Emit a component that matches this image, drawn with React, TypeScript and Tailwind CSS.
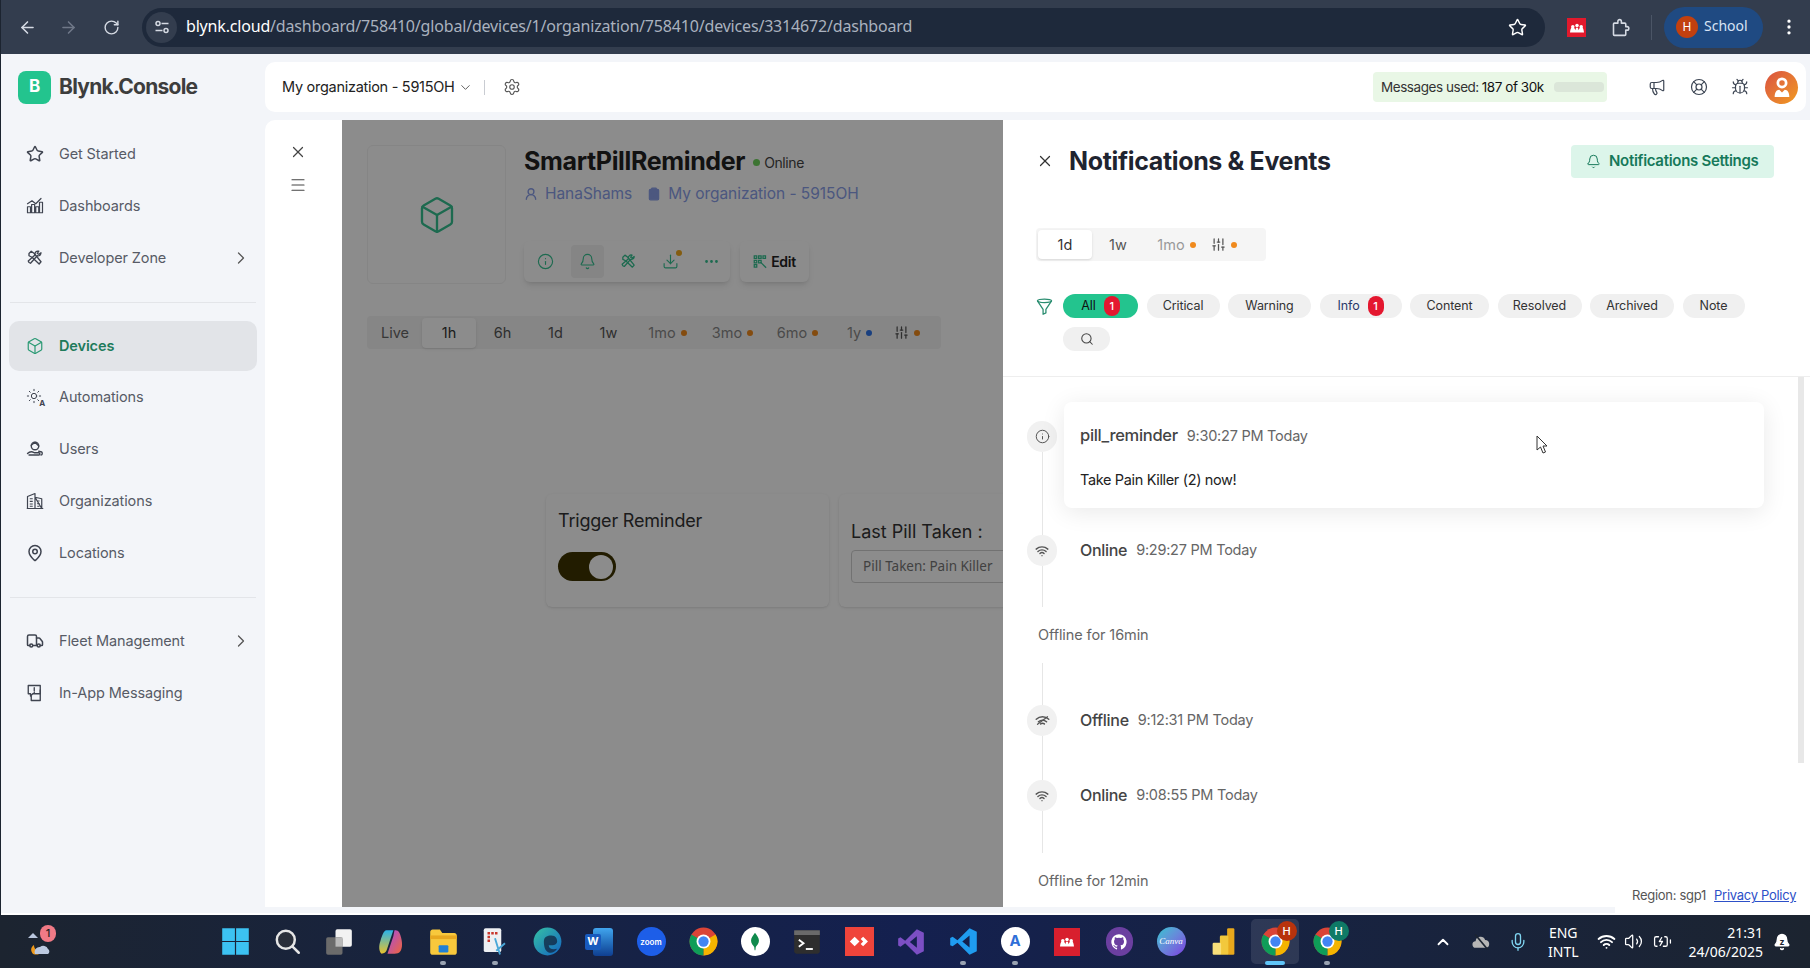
import React from "react";
import {
  ArrowLeft,
  ArrowRight,
  RotateCw,
  Star,
  EllipsisVertical,
  ChevronDown,
  ChevronRight,
  Settings,
  Megaphone,
  LifeBuoy,
  Bug,
  X,
  Menu,
  Box,
  UserRound,
  ClipboardList,
  Info,
  Bell,
  Download,
  Ellipsis,
  SlidersVertical,
  Search,
  Wifi,
  MapPin,
  Truck,
  Sun,
  ChevronUp,
  Mic,
  Volume2,
  BatteryCharging,
} from "lucide-react";

function ToolsIcon({ className }: { className?: string }) {
  return (
    <svg className={className} viewBox="0 0 24 24" fill="none" stroke="currentColor" strokeWidth="1.8" strokeLinejoin="round" strokeLinecap="round">
      <path d="M4 6l3-3 4 3 9 11-2.500 3L8 11 4 9z" />
      <path d="M20 5a4 4 0 0 1-5 4L6 19l-2-1-1-2 9-8a4 4 0 0 1 5-5l-2 3 2 1z" />
    </svg>
  );
}

function ChartIcon({ className }: { className?: string }) {
  return (
    <svg className={className} viewBox="0 0 24 24" fill="none" stroke="currentColor" strokeWidth="1.6" strokeLinejoin="round">
      <path d="M2 21v-8h4v8zM7.500 21V10h4v11zM13 21v-8h4v8zM18 21V7h4v14z" />
      <path d="M2 9l6-4 5 4 7-7" strokeLinecap="round" />
    </svg>
  );
}

function AutomationIcon({ className }: { className?: string }) {
  return (
    <span className={`relative block ${className}`}>
      <Sun className="h-[16px] w-[16px]" strokeWidth={1.5} />
      <span className="absolute -bottom-[1px] -right-[1px] bg-[#f3f5f9] text-[8px] font-bold leading-[8px]">A</span>
    </span>
  );
}

function PersonHandIcon({ className }: { className?: string }) {
  return (
    <svg className={className} viewBox="0 0 24 24" fill="none" stroke="currentColor" strokeWidth="1.8" strokeLinejoin="round" strokeLinecap="round">
      <circle cx="12" cy="8" r="5" />
      <path d="M7 7l5-4 5 5" />
      <path d="M2 18c3-3 6-3 9-1h6c2 0 2 3 0 3H4" />
      <path d="M17 15l4 1c1 1 1 4-1 4" />
    </svg>
  );
}

function BuildingIcon({ className }: { className?: string }) {
  return (
    <svg className={className} viewBox="0 0 24 24" fill="none" stroke="currentColor" strokeWidth="1.6" strokeLinejoin="round">
      <path d="M2 22V6l10-4v20zM12 7l9 2v13zM1 22h22" />
      <path d="M5 9h4M5 12.500h4M5 16h4M5 19h4M15 12h3M15 15.500h3M15 19h3" strokeWidth="1.400" />
    </svg>
  );
}

function PhoneMsgIcon({ className }: { className?: string }) {
  return (
    <svg className={className} viewBox="0 0 24 24" fill="none" stroke="currentColor" strokeWidth="1.8" strokeLinejoin="round" strokeLinecap="round">
      <path d="M7 16v6h12V8" />
      <path d="M3 2h16v11H9l-3 3v-3H3z" />
      <path d="M11 5v4M11 11v.5" />
    </svg>
  );
}

function EditGridIcon({ className }: { className?: string }) {
  return (
    <svg className={className} viewBox="0 0 24 24" fill="none" stroke="currentColor" strokeWidth="2">
      <path d="M2 3h4v4H2zM9 3h4v4H9zM16 3h4v4h-4zM2 10h4v4H2zM9 10h4v4H9zM2 17h4v4H2z" />
      <path d="M12 13l9 9" />
    </svg>
  );
}

function TuneIcon() {
  return (
    <svg viewBox="0 0 16 16" className="h-[16px] w-[16px]" fill="none" stroke="currentColor" strokeWidth="1.500">
      <circle cx="4" cy="4.500" r="2" />
      <path d="M7.500 4.500H14.500M1.500 11.500H8.500" />
      <circle cx="12" cy="11.500" r="2" />
    </svg>
  );
}

function ExtensionIcon() {
  return (
    <svg viewBox="0 0 24 24" className="ml-[24px] h-[21px] w-[21px]" fill="none" stroke="currentColor" strokeWidth="1.800" strokeLinejoin="round">
      <path d="M5 7h4V5a2 2 0 0 1 4 0v2h4a1 1 0 0 1 1 1v3h1.500a2 2 0 0 1 0 4H18v5a1 1 0 0 1-1 1H5a1 1 0 0 1-1-1V8a1 1 0 0 1 1-1z" />
    </svg>
  );
}

function FunnelIcon() {
  return (
    <svg viewBox="0 0 24 24" className="mt-[3px] h-[19px] w-[17px] shrink-0 text-[#2a8d70]" fill="none" stroke="currentColor" strokeWidth="1.800" strokeLinejoin="round">
      <ellipse cx="12" cy="4" rx="10" ry="2.500" />
      <path d="M2 4l8 12v7l4-2v-5l8-12" />
    </svg>
  );
}

function OfflineIcon() {
  return (
    <svg viewBox="0 0 24 24" className="h-[15px] w-[15px]" fill="none" stroke="currentColor" strokeWidth="2.400" strokeLinecap="round">
      <path d="M2 10a15 15 0 0 1 20 0M5.500 14a10 10 0 0 1 13 0M9 17.500a5 5 0 0 1 6 0" />
      <path d="M4 18L20 6" strokeWidth="2" />
    </svg>
  );
}

function AvatarIcon() {
  return (
    <svg viewBox="0 0 24 24" className="h-[22px] w-[22px]" fill="white">
      <path d="M12 1.500a6 6 0 1 1 0 12 6 6 0 0 1 0-12zm0 3a3 3 0 1 0 0 6 3 3 0 0 0 0-6z" fillRule="evenodd" />
      <path d="M4 23c0-5 2-8 5-8l3 3 3-3c3 0 5 3 5 8z" />
    </svg>
  );
}

const sideTop = [
  { label: "Get Started", Icon: Star },
  { label: "Dashboards", Icon: ChartIcon },
  { label: "Developer Zone", Icon: ToolsIcon, more: true },
];

const sideMid = [
  { label: "Automations", Icon: AutomationIcon },
  { label: "Users", Icon: PersonHandIcon },
  { label: "Organizations", Icon: BuildingIcon },
  { label: "Locations", Icon: MapPin },
];

const sideBottom = [
  { label: "Fleet Management", Icon: Truck, more: true },
  { label: "In-App Messaging", Icon: PhoneMsgIcon },
];

function SideItem({ label, Icon, more }: { label: string; Icon: React.ComponentType<{ className?: string }>; more?: boolean }) {
  return (
    <div className="flex h-[52px] items-center pl-[25px] pr-[14px] text-[14.500px] tracking-[-0.12px] text-[#575b66]">
      <Icon className="h-[18px] w-[18px] shrink-0 text-[#3f4450]" />
      <span className="ml-[15px] flex-1">{label}</span>
      {more && <ChevronRight className="h-5 w-5 text-[#555]" strokeWidth={1.5} />}
    </div>
  );
}

function Sidebar() {
  return (
    <aside className="flex w-[264px] shrink-0 flex-col">
      <div className="flex h-[66px] items-center pl-[17px]">
        <div className="flex h-[33px] w-[33px] items-center justify-center rounded-[8px] bg-[#23c48e] text-[17px] font-bold text-white">B</div>
        <span className="ml-[8px] text-[21px] font-bold tracking-[-0.75px] text-[#3d3d3d]">Blynk.Console</span>
      </div>
      <div className="mt-[8px]">
        {sideTop.map((s) => (
          <SideItem key={s.label} {...s} />
        ))}
      </div>
      <div className="mx-[9px] mt-[18px] border-t border-[#e3e5e9]" />
      <div className="mx-[8px] mt-[18px] flex h-[50px] items-center rounded-[10px] bg-[#e2e4e8] pl-[17px] text-[14.500px] font-semibold tracking-[-0.12px] text-[#1e7b5b]">
        <Box className="h-[18px] w-[18px] text-[#2b9a74]" strokeWidth={1.6} />
        <span className="ml-[15px]">Devices</span>
      </div>
      <div>
        {sideMid.map((s) => (
          <SideItem key={s.label} {...s} />
        ))}
      </div>
      <div className="mx-[9px] mt-[18px] border-t border-[#e3e5e9]" />
      <div className="mt-[17px]">
        {sideBottom.map((s) => (
          <SideItem key={s.label} {...s} />
        ))}
      </div>
    </aside>
  );
}

function Dot({ color = "bg-[#f08a1d]" }: { color?: string }) {
  return <span className={`ml-[5px] inline-block h-[6px] w-[6px] rounded-full ${color}`} />;
}

function ChromeBar() {
  return (
    <div className="flex h-[54px] shrink-0 items-center bg-[#333d4e] text-[#d5dae3]">
      <ArrowLeft className="ml-[17px] h-[19px] w-[19px]" />
      <ArrowRight className="ml-[22px] h-[19px] w-[19px] text-[#6f7888]" />
      <RotateCw className="ml-[25px] h-[17px] w-[17px]" />
      <div className="ml-[22px] flex h-[39px] w-[1403px] items-center rounded-full bg-[#1e293b] pl-[4px] pr-[18px]">
        <div className="flex h-[31px] w-[31px] items-center justify-center rounded-full bg-[#333d4e]">
          <TuneIcon />
        </div>
        <span className="ml-[9px] flex-1 -translate-y-[1px] font-['Noto_Sans',sans-serif] text-[16px] tracking-[-0.18px] text-[#aab2bf]">
          <span className="text-white">blynk.cloud</span>/dashboard/758410/global/devices/1/organization/758410/devices/3314672/dashboard
        </span>
        <Star className="h-[19px] w-[19px] text-white" strokeWidth={1.8} />
      </div>
      <div className="ml-[22px] flex h-[19px] w-[19px] items-center justify-center bg-[#e2192c]">
        <MendeleyGlyph />
      </div>
      <ExtensionIcon />
      <div className="ml-[20px] h-[25px] border-l border-[#4b5566]" />
      <div className="ml-[12px] flex h-[41px] w-[99px] items-center rounded-full bg-[#1f4a82] pl-[12px] font-['Noto_Sans',sans-serif] text-[14px] text-[#d8e4f5]">
        <span className="flex h-[22px] w-[22px] items-center justify-center rounded-full bg-[#c2400f] text-[12px] text-white">H</span>
        <span className="ml-[6px] -translate-y-[2px]">School</span>
      </div>
      <EllipsisVertical className="ml-[16px] h-[20px] w-[20px] text-white" />
    </div>
  );
}

function MendeleyGlyph() {
  return (
    <svg viewBox="0 0 20 14" className="h-[11px] w-[14px]" fill="white">
      <circle cx="10" cy="4" r="2.500" />
      <circle cx="4" cy="6" r="2.500" />
      <circle cx="16" cy="6" r="2.500" />
      <path d="M0 14c1-7 2-7 4-7s3 2 4 4c0-3 1-4 2-4s2 1 2 4c1-2 2-4 4-4s3 0 4 7z" />
    </svg>
  );
}

function Header() {
  return (
    <header className="mt-[8px] mr-[4px] flex h-[50px] items-center rounded-[10px] bg-white pl-[17px] pr-[8px]">
      <span className="text-[14.500px] tracking-[-0.28px] text-[#222]">My organization - 5915OH</span>
      <ChevronDown className="ml-[3px] h-[15px] w-[15px] text-[#555]" strokeWidth={1.5} />
      <div className="ml-[11px] h-[15px] border-l border-[#c9ccd2]" />
      <Settings className="ml-[18px] h-[18px] w-[18px] text-[#555]" strokeWidth={1.5} />
      <div className="ml-auto flex h-[30px] w-[234px] items-center rounded-[4px] bg-[#e9f7e6] pl-[8px] text-[13.500px] tracking-[-0.45px] text-[#333]">
        Messages used: <span className="ml-[3px] text-[#111]">187 of 30k</span>
        <div className="ml-[10px] h-[10px] w-[50px] rounded-[4px] bg-[#dbe6d9]" />
      </div>
      <Megaphone className="ml-[41px] h-[18px] w-[18px] text-[#3d4654]" strokeWidth={1.6} />
      <LifeBuoy className="ml-[24px] h-[18px] w-[18px] text-[#3d4654]" strokeWidth={1.6} />
      <Bug className="ml-[23px] h-[18px] w-[18px] text-[#3d4654]" strokeWidth={1.6} />
      <div className="ml-[16px] flex h-[33px] w-[33px] items-center justify-center rounded-full bg-gradient-to-br from-[#d9503f] to-[#f09a1a]">
        <AvatarIcon />
      </div>
    </header>
  );
}

const tabs = [
  { label: "6h" },
  { label: "1d" },
  { label: "1w" },
  { label: "1mo", dot: "bg-[#f08a1d]" },
  { label: "3mo", dot: "bg-[#f08a1d]" },
  { label: "6mo", dot: "bg-[#f08a1d]" },
  { label: "1y", dot: "bg-[#2f74e8]" },
];

function DevicePanel() {
  return (
    <div className="relative w-[661px] shrink-0 overflow-hidden bg-white pl-[25px] pt-[25px]">
      <div className="flex">
        <div className="flex h-[139px] w-[139px] items-center justify-center rounded-[6px] border border-[#f2f2f2]">
          <Box className="h-[40px] w-[40px] text-[#35c191]" strokeWidth={1.4} />
        </div>
        <div className="ml-[18px]">
          <div className="flex h-[32px] translate-y-[1px] items-center">
            <span className="text-[25px] font-bold tracking-[-0.35px] text-[#222]">SmartPillReminder</span>
            <span className="ml-[8px] h-[7px] w-[7px] rounded-full bg-[#6ed35c]" />
            <span className="ml-[4px] text-[14px] tracking-[-0.4px] text-[#444]">Online</span>
          </div>
          <div className="mt-[5px] flex items-center text-[15.500px] tracking-[-0.05px] text-[#8a9ee8]">
            <UserRound className="h-[14px] w-[14px]" strokeWidth={2.4} />
            <span className="ml-[7px]">HanaShams</span>
            <ClipboardList className="ml-[15px] h-[14px] w-[14px]" fill="currentColor" />
            <span className="ml-[7px]">My organization - 5915OH</span>
          </div>
          <div className="mt-[36px] flex">
            <div className="flex h-[41px] w-[206px] items-center rounded-[6px] bg-white pl-[5px] shadow-md">
              <ToolBtn><Info className="h-[17px] w-[17px]" strokeWidth={1.6} /></ToolBtn>
              <ToolBtn active><Bell className="h-[17px] w-[17px]" strokeWidth={1.6} /></ToolBtn>
              <ToolBtn><ToolsIcon className="h-[17px] w-[17px]" /></ToolBtn>
              <ToolBtn>
                <span className="relative">
                  <Download className="h-[17px] w-[17px]" strokeWidth={1.6} />
                  <span className="absolute -right-[3px] -top-[3px] h-[6px] w-[6px] rounded-full bg-[#f0a81d]" />
                </span>
              </ToolBtn>
              <ToolBtn><Ellipsis className="h-[17px] w-[17px]" /></ToolBtn>
            </div>
            <div className="ml-[10px] flex h-[41px] w-[69px] items-center justify-center rounded-[6px] bg-white text-[14px] font-semibold tracking-[-0.3px] text-[#222] shadow-md">
              <EditGridIcon className="mr-[3px] h-[15px] w-[15px] text-[#35c191]" />
              Edit
            </div>
          </div>
        </div>
      </div>
      <div className="mt-[32px] flex h-[33px] w-[574px] items-center rounded-[4px] bg-[#f4f4f4] pl-[14px] text-[14.500px] text-[#666]">
        <span className="w-[41px]">Live</span>
        <span className="flex h-[30px] w-[54px] items-center justify-center rounded-[4px] bg-white text-[#333] shadow-sm">1h</span>
        {tabs.map((t, i) => (
          <span key={t.label} className={`flex items-center justify-center ${i < 3 ? "w-[53px] text-[#555]" : i === 6 ? "w-[59px] text-[#888]" : "w-[65px] text-[#888]"}`}>
            {t.label}
            {t.dot && <Dot color={t.dot} />}
          </span>
        ))}
        <span className="ml-[5px] flex items-center text-[#555]">
          <SlidersVertical className="h-[15px] w-[15px]" />
          <Dot />
        </span>
      </div>
      <div className="ml-[179px] mt-[145px] flex gap-[10px]">
        <div className="h-[113px] w-[283px] shrink-0 rounded-[6px] bg-white px-[12px] pt-[13px] shadow-sm">
          <div className="text-[18px] tracking-[-0.2px] text-[#333]">Trigger Reminder</div>
          <div className="mt-[18px] flex h-[29px] w-[58px] items-center justify-end rounded-full bg-[#3e3300] pr-[3px]">
            <span className="h-[24px] w-[24px] rounded-full bg-white" />
          </div>
        </div>
        <div className="h-[113px] w-[283px] shrink-0 rounded-[6px] bg-white px-[12px] pt-[24px] shadow-sm">
          <div className="text-[18px] leading-[28px] text-[#333]">Last Pill Taken :</div>
          <div className="mt-[4px] flex h-[33px] items-center rounded-[4px] border border-[#d0d0d0] pl-[11px] font-['Noto_Sans',sans-serif] text-[13.500px] text-[#777]">
            Pill Taken: Pain Killer
          </div>
        </div>
      </div>
      <div className="absolute inset-0 bg-black/45" />
    </div>
  );
}

function ToolBtn({ children, active }: { children: React.ReactNode; active?: boolean }) {
  return (
    <div className={`mr-[8.500px] flex h-[33px] w-[33px] shrink-0 items-center justify-center rounded-[4px] text-[#35c191] ${active ? "bg-[#f2f2f2]" : ""}`}>
      {children}
    </div>
  );
}

const chips = [
  { label: "All", badge: true, active: true, w: "w-[75px]" },
  { label: "Critical", w: "w-[73px]" },
  { label: "Warning", w: "w-[83px]" },
  { label: "Info", badge: true, w: "w-[82px]" },
  { label: "Content", w: "w-[79px]" },
  { label: "Resolved", w: "w-[84px]" },
  { label: "Archived", w: "w-[84px]" },
  { label: "Note", w: "w-[62px]" },
];

function Badge() {
  return <span className="ml-[8px] flex h-[20px] w-[16px] items-center justify-center rounded-full bg-[#e4172f] text-[11px] font-medium text-white">1</span>;
}

function Rail({ icon, above = 0, below }: { icon: React.ReactNode; above?: number; below: number }) {
  return (
    <div className="flex w-[30px] shrink-0 flex-col items-center">
      <div className="w-px bg-[#e6e6e6]" style={{ height: above }} />
      <div className="flex h-[31px] w-[30px] items-center justify-center rounded-full bg-[#f1f1f1] text-[#555]">{icon}</div>
      <div className="w-px bg-[#e6e6e6]" style={{ height: below }} />
    </div>
  );
}

function StatusEvent({ label, time, icon, above, below }: { label: string; time: string; icon: React.ReactNode; above?: number; below: number }) {
  return (
    <div className="ml-[24px] flex">
      <Rail icon={icon} above={above} below={below} />
      <div className="ml-[23px] flex h-[29px] items-center" style={{ marginTop: above }}>
        <span className="text-[16px] font-medium tracking-[-0.3px] text-[#444]">{label}</span>
        <span className="ml-[9px] text-[14.500px] tracking-[-0.25px] text-[#666]">{time}</span>
      </div>
    </div>
  );
}

function Gap({ text }: { text: string }) {
  return <div className="ml-[35px] flex h-[56px] items-center text-[14.500px] tracking-[-0.1px] text-[#666]">{text}</div>;
}

function Drawer() {
  return (
    <div className="flex min-w-0 flex-1 flex-col bg-white">
      <div className="flex h-[82px] shrink-0 items-center pl-[33px] pr-[36px]">
        <X className="h-[18px] w-[18px] text-[#333]" strokeWidth={1.6} />
        <h2 className="ml-[15px] flex-1 translate-y-[1px] text-[25px] font-bold tracking-[-0.35px] text-[#1f2430]">Notifications &amp; Events</h2>
        <div className="flex h-[33px] w-[203px] items-center rounded-[4px] bg-[#dcf5ea] pl-[15px] text-[15px] font-semibold tracking-[-0.3px] text-[#16795a]">
          <Bell className="h-[15px] w-[15px]" strokeWidth={1.6} />
          <span className="ml-[8px]">Notifications Settings</span>
        </div>
      </div>
      <div className="ml-[33px] mt-[26px] flex h-[33px] w-[230px] shrink-0 items-center rounded-[4px] bg-[#f5f5f5] pl-[2px] text-[14.500px] text-[#555]">
        <span className="flex h-[29px] w-[54px] items-center justify-center rounded-[4px] bg-white text-[#333] shadow-sm">1d</span>
        <span className="w-[52px] text-center">1w</span>
        <span className="flex w-[65px] items-center justify-center text-[#999]">1mo<Dot /></span>
        <span className="ml-[2px] flex items-center"><SlidersVertical className="h-[15px] w-[15px]" /><Dot /></span>
      </div>
      <div className="ml-[33px] mt-[33px] flex shrink-0">
        <FunnelIcon />
        <div className="ml-[10px] flex w-[700px] flex-wrap gap-x-[8.500px] gap-y-[9px]">
          {chips.map((c) => (
            <span
              key={c.label}
              className={`flex h-[24px] items-center justify-center rounded-full text-[12.500px] tracking-[-0.1px] ${c.w} ${
                c.active ? "bg-[#23c48e] text-[#111]" : "bg-[#f0f0f0] " + (c.label === "Info" ? "text-[#2b3a6b]" : "text-[#333]")
              }`}
            >
              {c.label}
              {c.badge && <Badge />}
            </span>
          ))}
          <span className="flex h-[24px] w-[47px] items-center justify-center rounded-full bg-[#f0f0f0]">
            <Search className="h-[14px] w-[14px] text-[#444]" strokeWidth={1.8} />
          </span>
        </div>
      </div>
      <div className="relative mt-[25px] min-h-0 flex-1 overflow-hidden border-t border-[#eeeeee] pt-[25px]">
        <div className="ml-[24px] flex">
          <div className="mt-[19px]">
            <Rail icon={<Info className="h-[15px] w-[15px]" strokeWidth={1.6} />} below={83} />
          </div>
          <div className="ml-[7px] h-[106px] w-[700px] rounded-[8px] bg-white pl-[16px] pt-[18px] shadow-[0_4px_24px_rgba(0,0,0,0.09)]">
            <div className="flex h-[31px] items-center">
              <span className="text-[16.500px] font-medium tracking-[-0.3px] text-[#444]">pill_reminder</span>
              <span className="ml-[9px] text-[14.500px] tracking-[-0.25px] text-[#666]">9:30:27 PM Today</span>
            </div>
            <div className="mt-[18px] text-[14.500px] tracking-[-0.35px] text-[#222]">Take Pain Killer (2) now!</div>
          </div>
        </div>
        <StatusEvent label="Online" time="9:29:27 PM Today" icon={<Wifi className="h-[14px] w-[14px]" strokeWidth={2.4} />} below={41} />
        <Gap text="Offline for 16min" />
        <StatusEvent label="Offline" time="9:12:31 PM Today" icon={<OfflineIcon />} above={42} below={44} />
        <StatusEvent label="Online" time="9:08:55 PM Today" icon={<Wifi className="h-[14px] w-[14px]" strokeWidth={2.4} />} below={42} />
        <Gap text="Offline for 12min" />
        <div className="absolute right-[6px] top-0 h-[386px] w-[6px] bg-[#e8e8e8]" />
        <svg className="absolute left-[533px] top-[58px] h-[19px] w-[12px]" viewBox="0 0 12 19">
          <path d="M1 1v14l3.500-3 2.500 6 2.500-1-2.500-6H11z" fill="white" stroke="#333" strokeWidth="1" />
        </svg>
      </div>
    </div>
  );
}

function ChromeLogo({ badge, badgeColor }: { badge?: boolean; badgeColor?: string }) {
  return (
    <span className="relative block h-[29px] w-[29px]">
      <svg viewBox="0 0 48 48" className="h-full w-full">
        <circle cx="24" cy="24" r="23" fill="#db4437" />
        <path d="M24 24L44 12.500A23 23 0 0 1 24 47Z" fill="#f4b400" />
        <path d="M24 24L24 47A23 23 0 0 1 4 12.500Z" fill="#0f9d58" />
        <circle cx="24" cy="24" r="11.500" fill="white" />
        <circle cx="24" cy="24" r="8.500" fill="#4285f4" />
      </svg>
      {badge && (
        <span className={`absolute -right-[7px] -top-[6px] flex h-[20px] w-[20px] items-center justify-center rounded-full text-[11px] font-medium text-white ${badgeColor}`}>H</span>
      )}
    </span>
  );
}

const taskIcons: { key: string; node: React.ReactNode; running?: boolean; active?: boolean }[] = [
  {
    key: "start",
    node: (
      <svg viewBox="0 0 24 24" className="h-[29px] w-[29px]">
        <path d="M1 1h10.500v10.500H1zM12.500 1H23v10.500H12.500zM1 12.500h10.500V23H1zM12.500 12.500H23V23H12.500z" fill="#3cc2f2" />
      </svg>
    ),
  },
  {
    key: "search",
    node: (
      <svg viewBox="0 0 24 24" className="h-[27px] w-[27px]" fill="#2a2f3a" stroke="#e6e6e6" strokeWidth="2.200" strokeLinecap="round">
        <circle cx="10.500" cy="10.500" r="8" />
        <path d="M16.500 16.500L22 22" />
      </svg>
    ),
  },
  {
    key: "taskview",
    node: (
      <svg viewBox="0 0 24 24" className="h-[28px] w-[28px]">
        <rect x="9" y="1" width="14" height="15" rx="1.500" fill="#f2f2f2" />
        <rect x="1" y="8" width="14" height="15" rx="1.500" fill="#6b6b6b" />
        <rect x="9" y="8" width="6" height="8" fill="#b9b9b9" />
      </svg>
    ),
  },
  {
    key: "copilot",
    node: (
      <svg viewBox="0 0 24 24" className="h-[28px] w-[28px]">
        <defs>
          <linearGradient id="cpa" x1="0" y1="0" x2="0" y2="1">
            <stop offset="0" stopColor="#2bb3e8" />
            <stop offset="1" stopColor="#e8c22b" />
          </linearGradient>
          <linearGradient id="cpb" x1="0" y1="0" x2="1" y2="1">
            <stop offset="0" stopColor="#a34be0" />
            <stop offset="1" stopColor="#f0653c" />
          </linearGradient>
        </defs>
        <path d="M8 2h6l-5 15c-1 4-3 5-5 5-2-1-3-6-1-11 1-4 3-9 5-9z" fill="url(#cpa)" />
        <path d="M15 2c3 0 4 1 5 4 2 6 2 11 0 14-1 2-3 2-5 2H9l5-15z" fill="url(#cpb)" />
      </svg>
    ),
  },
  {
    key: "explorer",
    running: true,
    node: (
      <svg viewBox="0 0 24 24" className="h-[29px] w-[29px]">
        <path d="M1 4c0-1 1-2 2-2h6l2 3h10c1 0 2 1 2 2v14c0 1-1 2-2 2H3c-1 0-2-1-2-2z" fill="#f8c83c" />
        <rect x="1" y="7" width="22" height="3" fill="#e8a820" />
        <rect x="8" y="15" width="8" height="6" rx="1" fill="#1f80d6" />
      </svg>
    ),
  },
  {
    key: "snip",
    running: true,
    node: (
      <svg viewBox="0 0 24 24" className="h-[30px] w-[30px]">
        <rect x="3" y="1" width="14" height="19" rx="1.500" fill="#eef0f3" />
        <path d="M6 4h2v2H6zM9 4h2v2H9zM12 4h2v2h-2zM6 7h2v2H6zM6 10h2v2H6z" fill="#c8372d" />
        <path d="M12 9l4 13M20 13l-7 6" stroke="#4aa8d8" strokeWidth="1.500" fill="none" />
      </svg>
    ),
  },
  {
    key: "edge",
    node: (
      <svg viewBox="0 0 24 24" className="h-[29px] w-[29px]">
        <defs>
          <linearGradient id="edg" x1="0" y1="0" x2="1" y2="1">
            <stop offset="0" stopColor="#35c1a4" />
            <stop offset="1" stopColor="#1464c0" />
          </linearGradient>
        </defs>
        <circle cx="12" cy="12" r="11.500" fill="url(#edg)" />
        <path d="M9 12c0-4 3-5 6-5 4 0 5 3 5 5 0 2-2 3-4 3h-3c0 3 3 4 7 3-2 3-5 4-7 3-3-1-4-5-4-9z" fill="#12233f" opacity="0.75" />
      </svg>
    ),
  },
  {
    key: "word",
    node: (
      <span className="relative block h-[28px] w-[28px]">
        <span className="absolute right-0 top-0 h-full w-[20px] rounded-[3px] bg-gradient-to-b from-[#41a5ee] to-[#103f91]" />
        <span className="absolute left-0 top-[6px] flex h-[16px] w-[16px] items-center justify-center rounded-[2px] bg-[#185abd] text-[11px] font-bold text-white">W</span>
      </span>
    ),
  },
  {
    key: "zoom",
    node: (
      <span className="flex h-[29px] w-[29px] items-center justify-center rounded-full bg-[#1d5ee8] text-[8px] font-semibold text-white">zoom</span>
    ),
  },
  { key: "chrome", node: <ChromeLogo /> },
  {
    key: "mongo",
    node: (
      <span className="flex h-[29px] w-[29px] items-center justify-center rounded-full bg-white">
        <svg viewBox="0 0 12 24" className="h-[19px] w-[10px]">
          <path d="M6 1c3 4 5 7 5 10 0 4-3 6-4 8l-.5 4h-1L5 19c-1-2-4-4-4-8 0-3 2-6 5-10z" fill="#0f8a4c" />
        </svg>
      </span>
    ),
  },
  {
    key: "terminal",
    node: (
      <svg viewBox="0 0 24 24" className="h-[28px] w-[28px]">
        <rect x="1" y="2" width="22" height="20" rx="2" fill="#2e2e2e" />
        <rect x="1" y="2" width="22" height="4" fill="#6a6a6a" />
        <path d="M5 10l4 3-4 3" stroke="white" strokeWidth="1.600" fill="none" />
        <path d="M11 18h6" stroke="white" strokeWidth="1.600" />
      </svg>
    ),
  },
  {
    key: "anydesk",
    node: (
      <svg viewBox="0 0 24 24" className="h-[29px] w-[29px]">
        <rect width="24" height="24" fill="#ef443b" />
        <path d="M8 8l4 4-4 4-4-4zM15 8l4 4-4 4-2-2 2-2-2-2z" fill="white" />
      </svg>
    ),
  },
  {
    key: "vs",
    node: (
      <svg viewBox="0 0 24 24" className="h-[28px] w-[28px]">
        <path d="M17 1l6 3v16l-6 3-10-10-4 3-2-1V9l2-1 4 3zM17 7l-6 5 6 5z" fill="#7c4fc4" />
      </svg>
    ),
  },
  {
    key: "vscode",
    running: true,
    node: (
      <svg viewBox="0 0 24 24" className="h-[29px] w-[29px]">
        <path d="M17 1l6 3v16l-6 3-10-10-4 3-2-1V9l2-1 4 3zM17 7l-6 5 6 5z" fill="#1f9cf0" />
      </svg>
    ),
  },
  {
    key: "android",
    running: true,
    node: (
      <span className="flex h-[29px] w-[29px] items-center justify-center rounded-full bg-white text-[15px] font-bold text-[#2f6fd8]">A</span>
    ),
  },
  {
    key: "mendeley",
    node: (
      <span className="flex h-[28px] w-[26px] items-center justify-center bg-[#d81f2e]">
        <MendeleyGlyph />
      </span>
    ),
  },
  {
    key: "github",
    node: (
      <span className="flex h-[29px] w-[27px] items-center justify-center rounded-full bg-[#6b3fa0]">
        <svg viewBox="0 0 16 16" className="h-[18px] w-[18px]" fill="white">
          <path d="M8 1a7 7 0 0 0-2.200 13.600c.35.06.5-.15.5-.34v-1.200c-2 .4-2.400-.95-2.400-.95-.3-.8-.8-1-.8-1-.65-.45.05-.44.05-.44.7.05 1.100.75 1.100.75.65 1.100 1.700.8 2.100.6.06-.45.25-.8.45-1-1.600-.2-3.200-.8-3.200-3.500 0-.8.3-1.400.7-1.900-.07-.2-.3-.9.07-1.900 0 0 .6-.2 1.900.7a6.500 6.500 0 0 1 3.500 0c1.300-.9 1.900-.7 1.900-.7.4 1 .15 1.700.07 1.900.45.5.7 1.100.7 1.900 0 2.700-1.600 3.300-3.200 3.500.25.2.5.65.5 1.300v1.900c0 .2.15.4.5.34A7 7 0 0 0 8 1z" />
        </svg>
      </span>
    ),
  },
  {
    key: "canva",
    node: (
      <span className="flex h-[29px] w-[29px] items-center justify-center rounded-full bg-gradient-to-br from-[#1fc4cf] to-[#7a33e0] font-['Liberation_Serif',serif] text-[9px] italic text-white">Canva</span>
    ),
  },
  {
    key: "powerbi",
    node: (
      <svg viewBox="0 0 24 24" className="h-[29px] w-[29px]">
        <rect x="15" y="1" width="6" height="22" rx="1" fill="#e8a81c" />
        <rect x="9" y="7" width="7" height="16" rx="1" fill="#f2c83c" />
        <rect x="3" y="13" width="7" height="10" rx="1" fill="#f8df7a" />
      </svg>
    ),
  },
  { key: "chromeh", active: true, node: <ChromeLogo badge badgeColor="bg-[#b8330c]" /> },
  { key: "chromeh2", running: true, node: <ChromeLogo badge badgeColor="bg-[#0f7a66]" /> },
];

function Taskbar() {
  return (
    <div className="flex h-[55px] shrink-0 items-center border-t-2 border-white bg-gradient-to-r from-[#1c2430] via-[#14204f] to-[#1c2430] pl-[24px] text-white">
      <span className="relative block h-[32px] w-[32px]">
        <svg viewBox="0 0 32 32" className="h-full w-full">
          <path d="M3 12l5-5 5 5z" fill="#b9c6de" />
          <path d="M8 28c-3-4-2-7 1-9 0 4 3 7 8 7-3 3-6 3-9 2z" fill="#f09a1a" />
          <path d="M10 28a5 5 0 0 1 5-7 5 5 0 0 1 8 2 3 3 0 0 1 0 5z" fill="#bcc9e0" />
        </svg>
        <span className="absolute left-[15px] -top-[1px] flex h-[17px] w-[16px] items-center justify-center rounded-full bg-[#f07a86] text-[11px] font-medium text-[#222]">1</span>
      </span>
      <div className="ml-[152px] flex">
        {taskIcons.map((t) => (
          <div key={t.key} className="relative flex h-[53px] w-[52px] items-center justify-center">
            {t.active && <span className="absolute inset-x-[2px] inset-y-[4px] rounded-[5px] bg-white/10" />}
            <span className="relative">{t.node}</span>
            {t.running && <span className="absolute bottom-[3px] left-1/2 h-[4px] w-[6px] -translate-x-1/2 rounded-full bg-[#9aa3b2]" />}
            {t.active && <span className="absolute bottom-[3px] left-1/2 h-[4px] w-[20px] -translate-x-1/2 rounded-full bg-[#60c5f8]" />}
          </div>
        ))}
      </div>
      <div className="ml-auto flex items-center pr-[19px] font-['Noto_Sans',sans-serif]">
        <ChevronUp className="h-[18px] w-[18px]" strokeWidth={2.4} />
        <svg viewBox="0 0 24 24" className="ml-[19px] h-[20px] w-[20px]">
          <path d="M6 19a4 4 0 0 1-.5-8A6 6 0 0 1 17 9.500 4.800 4.800 0 0 1 18 19z" fill="#b5b5b5" />
          <path d="M5 3l15 18" stroke="#1c2430" strokeWidth="2" />
        </svg>
        <Mic className="ml-[17px] h-[20px] w-[20px] text-[#7fd4f0]" strokeWidth={1.6} />
        <div className="ml-[20px] text-center text-[14px] leading-[19px]">ENG<br />INTL</div>
        <Wifi className="ml-[18px] h-[19px] w-[19px]" strokeWidth={2.4} />
        <Volume2 className="ml-[8px] h-[19px] w-[19px]" strokeWidth={1.6} />
        <BatteryCharging className="ml-[10px] h-[19px] w-[19px]" strokeWidth={1.6} />
        <div className="ml-[17px] text-right text-[14px] leading-[19px]">21:31<br />24/06/2025</div>
        <span className="relative ml-[10px] block h-[18px] w-[18px]">
          <Bell className="h-[18px] w-[18px]" fill="white" />
          <span className="absolute inset-0 flex items-center justify-center text-[9px] font-bold text-[#1c2430]">z</span>
        </span>
      </div>
    </div>
  );
}

export default function App() {
  return (
    <div className="flex h-[968px] w-[1810px] flex-col overflow-hidden border-l border-[#1c2430] bg-[#f3f5f9] font-['Inter',sans-serif]">
      <ChromeBar />
      <div className="flex min-h-0 flex-1">
        <Sidebar />
        <div className="relative flex min-w-0 flex-1 flex-col">
          <Header />
          <div className="mb-[6px] mt-[8px] flex min-h-0 flex-1 overflow-hidden rounded-tl-[10px] bg-white">
            <div className="flex w-[77px] shrink-0 flex-col pl-[24px] pt-[23px] text-[#444]">
              <X className="h-[18px] w-[18px]" strokeWidth={1.6} />
              <Menu className="mt-[15px] h-[18px] w-[18px]" strokeWidth={1.6} />
            </div>
            <DevicePanel />
            <Drawer />
          </div>
          <div className="absolute bottom-0 right-0 flex h-[34px] w-[195px] items-center bg-white pl-[17px] text-[13px] tracking-[-0.28px] text-[#555]">
            Region: sgp1
            <span className="ml-[8px] text-[#2d50c8] underline">Privacy Policy</span>
          </div>
        </div>
      </div>
      <Taskbar />
    </div>
  );
}
